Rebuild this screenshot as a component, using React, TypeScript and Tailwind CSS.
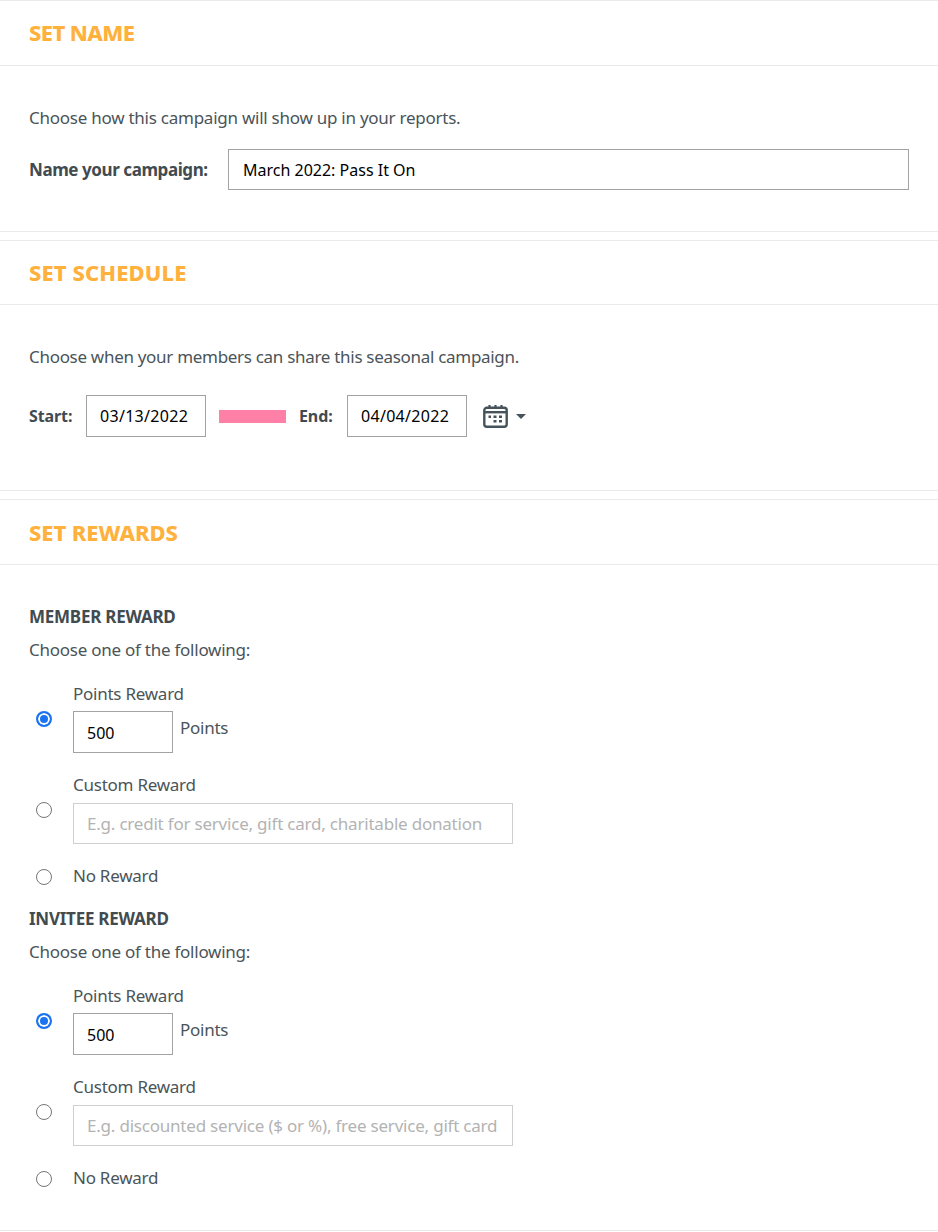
import React from "react";

const heading = "text-[22px] font-extrabold text-[#ffb13d] uppercase leading-none";
const fieldBox = "border border-[#a3a3a3] bg-white text-[16px] text-black outline-none";

function Radio({ checked, name }: { checked?: boolean; name: string }) {
  return (
    <input
      type="radio"
      name={name}
      defaultChecked={checked}
      className="appearance-none w-4 h-4 rounded-full border border-[#767676] bg-white checked:border-[#1a73f0] checked:border-2 checked:bg-[#1a73f0] checked:shadow-[inset_0_0_0_2px_#fff] shrink-0"
    />
  );
}

function CalendarIcon() {
  return (
    <svg width="25" height="24" viewBox="0 0 25 24" fill="none">
      <rect x="1.3" y="3.8" width="22.4" height="19" rx="2.5" stroke="#46535a" strokeWidth="2.4" />
      <path d="M1.5 8.2h22" stroke="#46535a" strokeWidth="2.4" />
      <path d="M6.5 1v3M12.5 1v3M18.5 1v3" stroke="#46535a" strokeWidth="2.2" />
      <path d="M5.5 11.5h2.5v2.5h-2.5zM10.5 11.5h3v2.5h-3zM16 11.5h3v2.5h-3zM10.5 16h3v2.5h-3zM16 16h3v2.5h-3z" fill="#46535a" />
    </svg>
  );
}

function RewardGroup({ title, name, placeholder }: { title: string; name: string; placeholder: string }) {
  return (
    <div>
      <div className="text-[17px] font-bold leading-[24px] text-[#414b50] uppercase">{title}</div>
      <div className="mt-[9px] leading-[24px]">Choose one of the following:</div>

      <div className="mt-[20px] flex items-center">
        <div className="flex w-[44px] pl-[7px] pt-[3px]">
          <Radio name={name} checked />
        </div>
        <div>
          <div className="leading-[24px]">Points Reward</div>
          <div className="mt-[5px] flex items-start">
            <input readOnly value="500" className={`${fieldBox} h-[42px] w-[100px] pl-[13px] pt-[2px] tracking-normal`} />
            <span className="ml-[7px] leading-[24px] mt-[5px]">Points</span>
          </div>
        </div>
      </div>

      <div className="mt-[20px] flex items-center">
        <div className="flex w-[44px] pl-[7px] pt-[3px]">
          <Radio name={name} />
        </div>
        <div>
          <div className="leading-[24px]">Custom Reward</div>
          <input
            readOnly
            placeholder={placeholder}
            className="mt-[6px] h-[41px] w-[440px] border border-[#cfcfcf] bg-white px-[13px] text-[17px] tracking-[-0.21px] outline-none placeholder:text-[#b3b3b3]"
          />
        </div>
      </div>

      <div className="mt-[20px] flex items-center">
        <div className="flex w-[44px] pl-[7px] pt-[1px]">
          <Radio name={name} />
        </div>
        <div className="leading-[24px]">No Reward</div>
      </div>
    </div>
  );
}

export default function App() {
  return (
    <div className="w-[938px] h-[1232px] bg-white text-[#4a5459] text-[17px] tracking-[-0.25px] font-['Noto_Sans',sans-serif] overflow-hidden">
      {/* Name */}
      <section className="border-t border-b border-[#eaeaea] h-[232px]">
        <div className="h-[65px] border-b border-[#eaeaea] flex items-center px-[29px]">
          <h2 className={`${heading} pb-[2px] tracking-[-0.6px]`}>Set Name</h2>
        </div>
        <div className="px-[29px] pt-[40px]">
          <p className="leading-[24px]">Choose how this campaign will show up in your reports.</p>
          <div className="mt-[19px] flex items-center">
            <label className="w-[199px] font-bold tracking-[-0.42px] text-[#414b50]">Name your campaign:</label>
            <input readOnly value="March 2022: Pass It On" className={`${fieldBox} h-[41px] w-[681px] px-[14px] tracking-normal`} />
          </div>
        </div>
      </section>

      {/* Schedule */}
      <section className="mt-[8px] border-t border-b border-[#eaeaea] h-[251px]">
        <div className="h-[64px] border-b border-[#eaeaea] flex items-center px-[29px]">
          <h2 className={`${heading} pb-[2px] tracking-[0.1px]`}>Set Schedule</h2>
        </div>
        <div className="px-[29px] pt-[40px]">
          <p className="leading-[24px] tracking-[-0.3px]">Choose when your members can share this seasonal campaign.</p>
          <div className="mt-[26px] flex items-center">
            <label className="w-[57px] font-bold text-[#414b50] text-[16px] tracking-[-0.1px]">Start:</label>
            <input readOnly value="03/13/2022" className={`${fieldBox} h-[42px] w-[120px] pl-[13px] tracking-[0.3px]`} />
            <div className="ml-[13px] w-[67px] h-[13px] bg-[#ff80a6]" />
            <label className="ml-[13px] w-[48px] font-bold text-[#414b50] text-[16px] tracking-[-0.1px]">End:</label>
            <input readOnly value="04/04/2022" className={`${fieldBox} h-[42px] w-[120px] pl-[13px] tracking-[0.3px]`} />
            <div className="ml-[16px]">
              <CalendarIcon />
            </div>
            <div className="ml-[8px] w-0 h-0 border-x-[5px] border-x-transparent border-t-[5px] border-t-[#46535a]" />
          </div>
        </div>
      </section>

      {/* Rewards */}
      <section className="mt-[8px] border-t border-b border-[#eaeaea] h-[732px]">
        <div className="h-[65px] border-b border-[#eaeaea] flex items-center px-[29px]">
          <h2 className={`${heading} tracking-[-0.1px]`}>Set Rewards</h2>
        </div>
        <div className="px-[29px] pt-[40px] flex flex-col gap-[19px]">
          <RewardGroup title="Member Reward" name="member" placeholder="E.g. credit for service, gift card, charitable donation" />
          <RewardGroup title="Invitee Reward" name="invitee" placeholder="E.g. discounted service ($ or %), free service, gift card" />
        </div>
      </section>
    </div>
  );
}
